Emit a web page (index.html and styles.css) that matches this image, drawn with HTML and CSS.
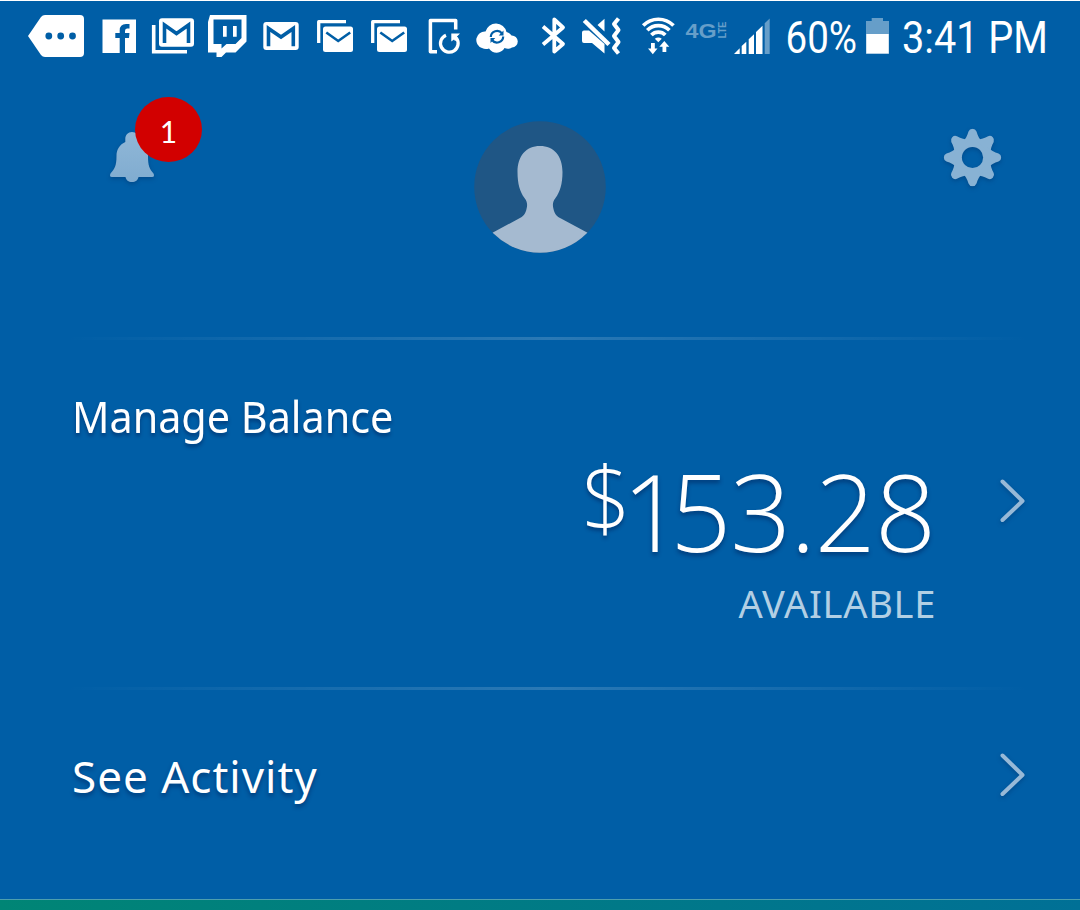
FILE: index.html
```html
<!DOCTYPE html>
<html lang="en">
<head>
    <meta charset="UTF-8">
    <meta name="viewport" content="width=device-width, initial-scale=1.0">
    <title>Balance</title>
    <link rel="stylesheet" href="styles.css">
</head>
<body>
    <div class="screen">
        <div class="status-bar">
            <!-- more notifications -->
            <svg width="66" height="75" viewBox="28 0 66 75">
                <path fill="#fff" d="M28 36 41 17Q42.500 15 45 15H80Q84 15 84 19V53Q84 57 80 57H45Q42.500 57 41 55Z"/>
                <g fill="#005ea6"><circle cx="48.800" cy="36" r="3.400"/><circle cx="60.700" cy="36" r="3.400"/><circle cx="72.500" cy="36" r="3.400"/></g>
            </svg>
            <!-- facebook -->
            <svg width="50" height="75" viewBox="94 0 50 75">
                <path fill="#fff" d="M102.500 19.500H136V53H102.500Z"/>
                <path fill="#005ea6" d="M119.700 53V38H115.300V33H119.700V30.500Q119.700 24 126 24H129.500V28.500H127Q125 28.500 125 31V33H129.500L129 38H125V53Z"/>
            </svg>
            <!-- mail accounts -->
            <svg width="58" height="75" viewBox="144 0 58 75">
                <path fill="none" stroke="#fff" stroke-width="3.600" d="M153.700 25V51.700H187"/>
                <rect x="159" y="18.300" width="35" height="28.500" rx="3" fill="#fff"/>
                <path fill="none" stroke="#005ea6" stroke-width="3.600" d="M164.500 43V25L176.500 33.500 188.500 25V43"/>
            </svg>
            <!-- twitch -->
            <svg width="52" height="75" viewBox="202 0 52 75">
                <path fill="#fff" fill-rule="evenodd" d="M210 15H246.500V41.500L235.500 52.500H226L221.500 57H216.500V52.500H208V22ZM213.500 19.500V44H221.500V48.500L226.500 44H235.500L241.500 38V19.500Z"/>
                <path fill="#fff" d="M223 26H226.700V36.700H223ZM233 26H236.700V36.700H233Z"/>
            </svg>
            <!-- gmail -->
            <svg width="54" height="75" viewBox="254 0 54 75">
                <rect x="263.300" y="22" width="35.400" height="28" rx="3" fill="#fff"/>
                <path fill="none" stroke="#005ea6" stroke-width="3.600" d="M268.500 46.300V28.500L281 37 293.300 28.500V46.300"/>
            </svg>
            <svg width="54" height="75" viewBox="308 0 54 75">
                <path fill="none" stroke="#fff" stroke-width="3.300" stroke-linejoin="round" d="M318.700 43V21.700H346"/>
                <rect x="323" y="26.500" width="30" height="25.500" rx="2.500" fill="#fff"/>
                <path fill="none" stroke="#005ea6" stroke-width="2.600" d="M326.300 32.500 338.200 41 350.200 32.500"/>
            </svg>
            <svg width="54" height="75" viewBox="308 0 54 75">
                <path fill="none" stroke="#fff" stroke-width="3.300" stroke-linejoin="round" d="M318.700 43V21.700H346"/>
                <rect x="323" y="26.500" width="30" height="25.500" rx="2.500" fill="#fff"/>
                <path fill="none" stroke="#005ea6" stroke-width="2.600" d="M326.300 32.500 338.200 41 350.200 32.500"/>
            </svg>
            <!-- device update -->
            <svg width="52" height="75" viewBox="416 0 52 75">
                <path fill="none" stroke="#fff" stroke-width="3.500" stroke-linejoin="round" d="M437 51.700H430.400V20.400H455.700V29.500"/>
                <path fill="none" stroke="#fff" stroke-width="3.300" d="M446 35.200A8.800 8.800 0 1 0 456.300 38"/>
                <path fill="#fff" d="M451.300 33.500H460L457 36.500 458 39 455 41 454 39.500 451.300 41.500Z"/>
            </svg>
            <!-- cloud sync -->
            <svg width="62" height="75" viewBox="468 0 62 75">
                <path fill="#fff" d="M485.500 31.500A10.800 10.800 0 0 1 506.500 32 8 8 0 0 1 511.500 35.500 6 6 0 0 1 512 47.500 8 8 0 0 1 504.500 48 9 9 0 0 1 489 48.500 8 8 0 0 1 482 48 8.500 8.500 0 0 1 485.500 31.500Z"/>
                <path fill="none" stroke="#005ea6" stroke-width="2.200" d="M490.800 37A6.200 6.200 0 0 1 502 33.500M503.200 36.500A6.200 6.200 0 0 1 492 40"/>
                <path fill="#005ea6" d="M503.500 30.500V35.500H498.700ZM490.500 43V38H495.300Z"/>
            </svg>
            <!-- bluetooth -->
            <svg width="44" height="75" viewBox="530 0 44 75">
                <path fill="none" stroke="#fff" stroke-width="3.800" stroke-linejoin="round" d="M543 26.500 563 44 554.300 51.500V19.500L563 27.500 543 44.500"/>
            </svg>
            <!-- vibrate -->
            <svg width="58" height="75" viewBox="574 0 58 75">
                <path fill="#fff" d="M584 30.500H589L604.500 44V53.500L592 43H584Q582 43 582 41V32.500Q582 30.500 584 30.500ZM604.500 18.700V31.500L597.500 25Z"/>
                <path stroke="#fff" stroke-width="4.500" d="M584.300 20.500 609 44.500"/>
                <path fill="none" stroke="#fff" stroke-width="4" stroke-linejoin="round" d="M618.500 18.500 614 24 618.500 30 614 36 618.500 42 614 48 618.500 53.500"/>
            </svg>
            <!-- wifi -->
            <svg width="48" height="75" viewBox="632 0 48 75">
                <g fill="none" stroke="#fff" stroke-width="3.700">
                    <path d="M643.200 25.500A21.500 21.500 0 0 1 673.500 25.500"/>
                    <path d="M647.300 30.300A15.500 15.500 0 0 1 669.400 30.300"/>
                    <path d="M651.400 35A9.700 9.700 0 0 1 665.300 35"/>
                </g>
                <path fill="#fff" d="M654.800 38.800Q658.300 36 661.800 38.800L658.300 42.300ZM651 43H654.800V48.500H657.500L652.800 54.200 648 48.500H651ZM662.500 52V46.800H659.300L664.300 41 669.300 46.800H666.300V52Z"/>
            </svg>
            <svg width="50" height="75" viewBox="680 0 50 75">
                <text class="network" x="685.500" y="37.800" textLength="31" lengthAdjust="spacingAndGlyphs">4G</text>
                <text class="network lte" transform="translate(726 38.200) rotate(-90)" textLength="16.500" lengthAdjust="spacingAndGlyphs">LTE</text>
            </svg>
            <!-- signal -->
            <svg width="50" height="75" viewBox="730 0 50 75">
                <path fill="#fff" d="M734 54 739.700 48.300V54ZM741.700 46 746.300 41.700V54H741.700ZM748.700 39.300 754 34.300V54H748.700ZM756 32 762.500 25.700V54H756Z"/>
                <path fill="#669ec9" d="M764.700 23.300 769.700 18.500V54H764.700Z"/>
            </svg>
            <svg width="80" height="75" viewBox="780 0 80 75">
                <text class="status-text" x="785.500" y="53.200" textLength="71.500" lengthAdjust="spacingAndGlyphs">60%</text>
            </svg>
            <!-- battery -->
            <svg width="34" height="75" viewBox="860 0 34 75">
                <path fill="#669ec9" d="M866 21H871.700V18H883V21H889V54H866Z"/>
                <path fill="#fff" d="M866.300 34H888.700V53.500H866.300Z"/>
            </svg>
            <svg width="160" height="75" viewBox="894 0 160 75">
                <text class="status-text" x="902" y="53.200" textLength="146" lengthAdjust="spacingAndGlyphs">3:41 PM</text>
            </svg>
        </div>

        <div class="header">
            <div class="notifications">
                <svg class="shadow" width="44" height="50" viewBox="110 132 44 50">
                    <path fill="url(#tint)" d="M132 132C136 132 138.700 135 138.700 139V142C145 145 148 150 148 156C148 166 149.500 169 153.500 173.500Q155 177 152 177H138.500C138 180 135.500 182 132 182S126 180 125.500 177H112Q109 177 110.500 173.500C114.500 169 116.500 166 116.500 156C116.500 150 119 145 125.300 142V139C125.300 135 128 132 132 132Z"/>
                    <defs><linearGradient id="tint" x2="0" y2="1"><stop stop-color="#90b7d7"/><stop offset="1" stop-color="#80acd0"/></linearGradient></defs>
                </svg>
                <span class="badge">1</span>
            </div>
            <svg class="avatar" width="132" height="132" viewBox="474 121 132 132">
                <defs><clipPath id="round"><circle cx="540" cy="187" r="65.800"/></clipPath></defs>
                <circle cx="540" cy="187" r="65.800" fill="#1f5685"/>
                <path clip-path="url(#round)" fill="#a5bad0" d="M540 146C554 146 562.500 156 562.500 172C562.500 184 560 192 555.500 198C552.500 202 552.500 205 553.500 209C554.500 214 557 216.500 561 218.500L588 233V260H492V233L519 218.500C523 216.500 525.500 214 526.500 209C527.500 205 527.500 202 524.500 198C520 192 517.500 184 517.500 172C517.500 156 526 146 540 146Z"/>
            </svg>
            <svg class="gear shadow" width="58" height="58" viewBox="-28.500 -28.500 58 58">
                <defs>
                    <mask id="hole"><rect x="-29" y="-29" width="58" height="58" fill="#fff"/><circle r="10.600"/></mask>
                    <path id="tooth" d="M-10.500 -15C-7 -18 -5.200 -22 -4 -26Q-3 -28.700 0 -28.700T4 -26C5.200 -22 7 -18 10.500 -15Z"/>
                </defs>
                <g fill="#88b2d4" mask="url(#hole)">
                    <circle r="19"/>
                    <use href="#tooth"/>
                    <use href="#tooth" transform="rotate(45)"/>
                    <use href="#tooth" transform="rotate(90)"/>
                    <use href="#tooth" transform="rotate(135)"/>
                    <use href="#tooth" transform="rotate(180)"/>
                    <use href="#tooth" transform="rotate(225)"/>
                    <use href="#tooth" transform="rotate(270)"/>
                    <use href="#tooth" transform="rotate(315)"/>
                </g>
            </svg>
        </div>

        <div class="divider"></div>

        <div class="balance">
            <h2 class="title manage">Manage Balance</h2>
            <div class="balance-row">
                <div class="amount"><span class="currency">$</span><span class="number"><span class="lead">1</span>53.28</span></div>
                <svg class="chevron shadow" width="26" height="44" viewBox="0 0 26 44">
                    <path d="M2.500 2.500 22.500 22 2.500 41"/>
                </svg>
            </div>
            <div class="available">AVAILABLE</div>
        </div>

        <div class="divider"></div>

        <div class="activity">
            <h2 class="title see">See Activity</h2>
            <svg class="chevron shadow" width="26" height="44" viewBox="0 0 26 44">
                <path d="M2.500 2.500 22.500 22 2.500 41"/>
            </svg>
        </div>

        <div class="bottom-strip"></div>
    </div>
</body>
</html>
```
FILE: styles.css
```css
* {
    margin: 0;
    padding: 0;
    box-sizing: border-box;
}

body {
    font-family: 'Noto Sans', 'Open Sans', sans-serif;
    background: #005ea6;
    color: #fff;
}

svg {
    display: block;
    flex: none;
    overflow: visible;
}

.screen {
    width: 1080px;
    height: 910px;
    display: flex;
    flex-direction: column;
    overflow: hidden;
    background: #005ea6;
    box-shadow: inset 0 1px 0 #fff;
}

.status-bar {
    display: flex;
    height: 75px;
    padding-left: 28px;
}

.status-text {
    font-family: Roboto, sans-serif;
    font-size: 44px;
    fill: #fff;
}

.network {
    font-family: 'Liberation Sans', sans-serif;
    font-size: 21px;
    font-weight: bold;
    fill: #669ec9;
}

.lte {
    font-size: 11px;
}

.header {
    display: flex;
    justify-content: space-between;
    align-items: flex-start;
    height: 262px;
    padding: 46px 78px 0 110px;
}

.notifications {
    position: relative;
    width: 25px;
    margin-top: 11px;
}

.badge {
    position: absolute;
    left: 25px;
    top: -35px;
    width: 67px;
    height: 65px;
    border-radius: 50%;
    background: #d20000;
    font-family: Lato, sans-serif;
    font-size: 30px;
    line-height: 68px;
    text-align: center;
}

.gear {
    margin-top: 8px;
}

.shadow {
    filter: drop-shadow(0 2px 2px rgba(0, 30, 80, 0.3));
}

.divider {
    height: 3px;
    margin: 0 50px 0 65px;
    background: linear-gradient(90deg, rgba(255, 255, 255, 0), rgba(255, 255, 255, 0.17) 50%, rgba(255, 255, 255, 0));
}

.balance {
    height: 347px;
    padding: 46px 54px 0 72px;
}

.title {
    font-size: 44px;
    font-weight: 400;
    line-height: 60px;
    white-space: nowrap;
    text-shadow: 0 3px 4px rgba(0, 20, 70, 0.45);
    transform-origin: left;
}

.manage {
    transform: scaleX(0.939);
}

.see {
    letter-spacing: 1px;
}

.balance-row {
    display: flex;
    justify-content: flex-end;
    align-items: flex-start;
    height: 132px;
}

.amount {
    display: flex;
    margin-right: 65px;
    font-family: 'Open Sans', sans-serif;
    font-weight: 360;
    text-shadow: 0 3px 4px rgba(0, 20, 70, 0.45);
}

.currency {
    margin-right: -9px;
    font-size: 88px;
    line-height: 100px;
    transform: scaleX(0.98);
}

.number {
    font-size: 107px;
    line-height: 130px;
    letter-spacing: -1px;
}

.lead {
    margin-right: -12px;
}

.chevron {
    margin-top: 33px;
    fill: none;
    stroke: #97b9d7;
    stroke-width: 4;
    stroke-linecap: round;
    stroke-linejoin: round;
}

.available {
    margin-right: 90px;
    font-size: 38px;
    line-height: 50px;
    letter-spacing: 0.700px;
    text-align: right;
    color: #b2cfe4;
}

.activity {
    display: flex;
    justify-content: space-between;
    height: 209px;
    padding: 56px 54px 0 72px;
}

.activity .chevron {
    margin-top: 7px;
}

.bottom-strip {
    height: 11px;
    border-top: 1px solid #4d9fae;
    background: linear-gradient(90deg, #008575, #007096);
}
```
